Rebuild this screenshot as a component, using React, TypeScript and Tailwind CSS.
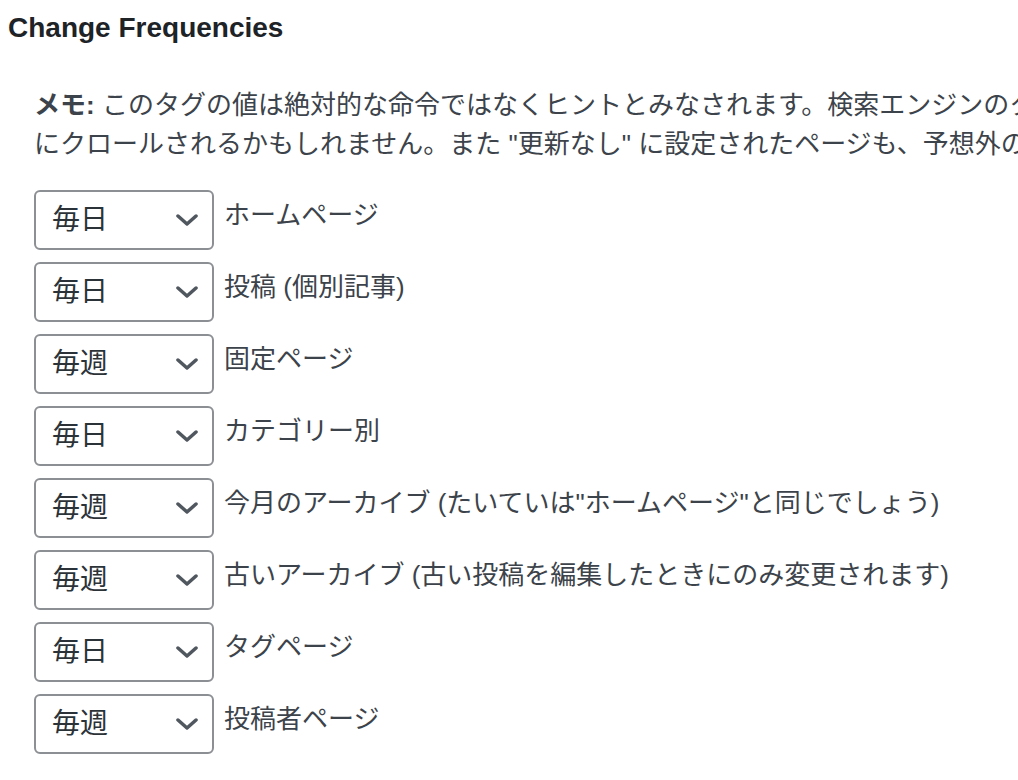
import { useState } from 'react'

const options = ['常に', '毎時', '毎日', '毎週', '毎月', '毎年', '更新なし']

const rows = [
  { value: '毎日', label: 'ホームページ' },
  { value: '毎日', label: '投稿 (個別記事)' },
  { value: '毎週', label: '固定ページ' },
  { value: '毎日', label: 'カテゴリー別' },
  { value: '毎週', label: '今月のアーカイブ (たいていは"ホームページ"と同じでしょう)' },
  { value: '毎週', label: '古いアーカイブ (古い投稿を編集したときにのみ変更されます)' },
  { value: '毎日', label: 'タグページ' },
  { value: '毎週', label: '投稿者ページ' },
]

function FreqSelect({ initial }: { initial: string }) {
  const [value, setValue] = useState(initial)
  return (
    <div className="relative shrink-0">
      <select
        value={value}
        onChange={(e) => setValue(e.target.value)}
        className="h-[60px] w-[180px] appearance-none rounded-[6px] border-2 border-[#8c8f94] bg-white pl-4 pr-12 text-[28px] text-[#2c3338] outline-none"
      >
        {options.map((o) => (
          <option key={o} value={o}>
            {o}
          </option>
        ))}
      </select>
      <svg
        width="22"
        height="12"
        viewBox="0 0 22 12"
        className="pointer-events-none absolute right-4 top-1/2 -translate-y-1/2 text-[#50575e]"
      >
        <path d="M2 2 L11 10 L20 2" fill="none" stroke="currentColor" strokeWidth="3.5" strokeLinecap="round" strokeLinejoin="round" />
      </svg>
    </div>
  )
}

export default function App() {
  return (
    <div className="min-h-screen overflow-hidden bg-white pl-2 font-['Liberation_Sans','Noto_Sans_CJK_JP',sans-serif]">
      <h3 className="mt-[10px] text-[28px] font-bold leading-[36px] text-[#1d2327]">Change Frequencies</h3>
      <div className="pl-[26px]">
        <p className="mt-[40px] whitespace-nowrap text-[26px] leading-[39px] text-[#3c434a]">
          <strong className="font-bold">メモ:</strong> このタグの値は絶対的な命令ではなくヒントとみなされます。検索エンジンのクローラーはこの設定を考慮しますが、"毎時" のページをそれほど頻繁にクロールしないことも、"毎年" のページをより頻繁
          <br />
          にクロールされるかもしれません。また "更新なし" に設定されたページも、予想外の変更に対応するため定期的にクロールされるでしょう。
        </p>
        <ul className="mt-[26px] flex flex-col gap-3">
          {rows.map((r) => (
            <li key={r.label} className="flex items-start gap-[10px]">
              <FreqSelect initial={r.value} />
              <span className="mt-[6px] whitespace-nowrap text-[26px] leading-[39px] text-[#3c434a]">{r.label}</span>
            </li>
          ))}
        </ul>
      </div>
    </div>
  )
}
